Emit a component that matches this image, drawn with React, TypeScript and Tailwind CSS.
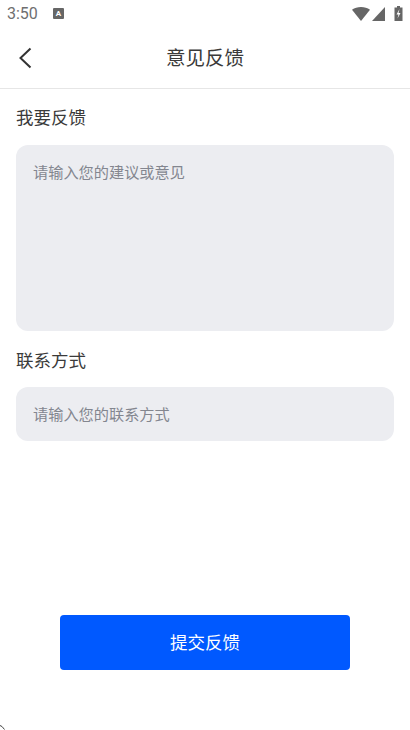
import React from 'react';

const StatusBar: React.FC = () => (
  <div className="h-[27px] flex items-center justify-between pl-[7px] pr-[7px] text-[#6f6f6f]">
    <div className="flex items-center">
      <span className="text-[16px] leading-none font-['Roboto',sans-serif]">3:50</span>
      <span className="ml-[15px] w-[11px] h-[11px] rounded-[1px] bg-[#666] text-white text-[8px] leading-[11px] font-bold text-center font-['Roboto',sans-serif]">A</span>
    </div>
    <div className="flex items-center">
      <svg width="18" height="14" viewBox="0 0 18 14" className="block">
        <path d="M0 2.700C2.500 .9 5.600 0 9 0s6.500 .9 9 2.700L9 14z" fill="#666" />
      </svg>
      <svg width="13" height="14" viewBox="0 0 13 14" className="ml-[2px] block">
        <path d="M13 0v14H0z" fill="#666" />
      </svg>
      <svg width="9" height="15" viewBox="0 0 9 15" className="ml-[9px] block">
        <path d="M3 0h3v1.500h2.500V15H.5V1.500H3z" fill="#666" />
        <path d="M5.500 3 2.500 8.500h2L3.500 12.500l3-5.500h-2z" fill="#fff" />
      </svg>
    </div>
  </div>
);

const App: React.FC = () => {
  return (
    <div className="w-[410px] h-[730px] bg-white overflow-hidden relative flex flex-col font-['Noto_Sans_CJK_SC','Noto_Sans',sans-serif]">
      <StatusBar />

      {/* Header */}
      <div className="h-[62px] relative flex items-center justify-center border-b border-[#e6e6e6]">
        <button className="absolute left-[17px] top-[19px]">
          <svg width="16" height="24" viewBox="0 0 16 24" fill="none" className="block">
            <path d="M13.500 2.500 3.500 12l10 9.500" stroke="#333" strokeWidth="2" />
          </svg>
        </button>
        <h1 className="text-[19.500px] leading-none font-normal text-[#3a3a3a] -mt-[2px]">意见反馈</h1>
      </div>

      {/* Form */}
      <div className="flex-1 flex flex-col px-4">
        <label className="mt-[15px] h-[26px] text-[17.500px] leading-[26px] text-[#3a3a3a]">我要反馈</label>
        <textarea
          placeholder="请输入您的建议或意见"
          className="mt-[15px] h-[186px] w-full resize-none rounded-[12px] bg-[#ecedf1] px-[17px] py-[15px] text-[15.200px] leading-[22px] outline-none placeholder:text-[#83868f]"
        />
        <label className="mt-[16px] h-[26px] text-[17.500px] leading-[26px] text-[#3a3a3a]">联系方式</label>
        <input
          placeholder="请输入您的联系方式"
          className="mt-[14px] h-[54px] w-full rounded-[12px] bg-[#ecedf1] px-[17px] text-[15.200px] pb-[2px] outline-none placeholder:text-[#83868f]"
        />
        <button className="mt-[174px] mx-[44px] h-[55px] rounded-[4px] bg-[#0059ff] text-white text-[17.500px]">提交反馈</button>
      </div>

      <svg width="6" height="5" viewBox="0 0 6 5" className="absolute left-0 bottom-0 block">
        <path d="M0 .5 2 1.500 4.500 4.500" stroke="#444" strokeWidth="1" fill="none" />
      </svg>
    </div>
  );
};

export default App;
